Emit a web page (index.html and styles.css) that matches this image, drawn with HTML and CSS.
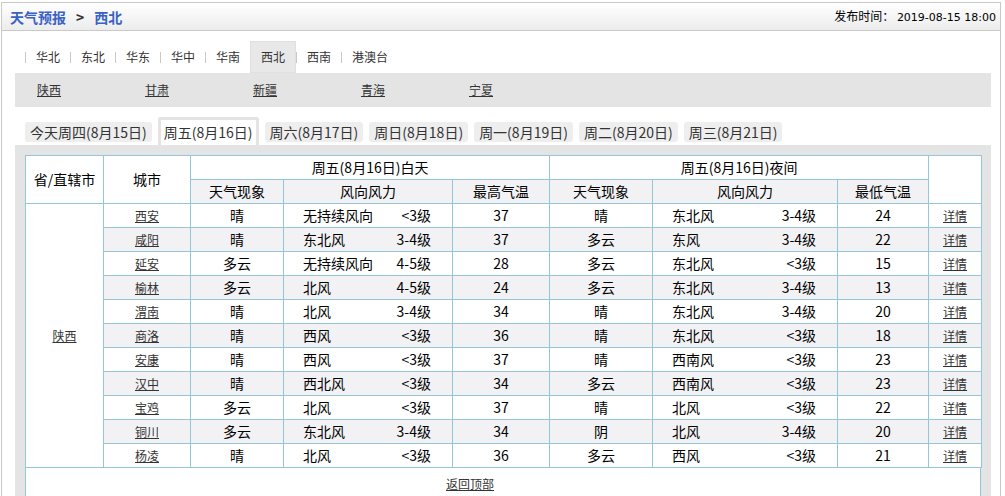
FILE: index.html
```html
<!DOCTYPE html>
<html lang="zh-CN">
<head>
<meta charset="utf-8">
<title>天气预报 - 西北</title>
<link rel="stylesheet" href="styles.css">
</head>
<body>
<div class="wrap">
  <div class="head">
    <div class="crumb"><a class="crumb-link" href="#">天气预报</a><span class="gt">&gt;</span><a class="crumb-link" href="#">西北</a></div>
    <div class="pub">发布时间： <span class="date">2019-08-15 18:00</span></div>
  </div>
  <div class="content">
    <ul class="regions">
      <li class="sep"></li><li class="region">华北</li>
      <li class="sep"></li><li class="region">东北</li>
      <li class="sep"></li><li class="region">华东</li>
      <li class="sep"></li><li class="region">华中</li>
      <li class="sep"></li><li class="region">华南</li>
      <li class="sep"></li><li class="region active">西北</li>
      <li class="sep"></li><li class="region">西南</li>
      <li class="sep"></li><li class="region">港澳台</li>
    </ul>
    <ul class="provinces">
      <li><a href="#">陕西</a></li>
      <li><a href="#">甘肃</a></li>
      <li><a href="#">新疆</a></li>
      <li><a href="#">青海</a></li>
      <li><a href="#">宁夏</a></li>
    </ul>
    <ul class="days">
      <li class="day">今天周四(8月15日)</li>
      <li class="day active">周五(8月16日)</li>
      <li class="day">周六(8月17日)</li>
      <li class="day">周日(8月18日)</li>
      <li class="day">周一(8月19日)</li>
      <li class="day">周二(8月20日)</li>
      <li class="day">周三(8月21日)</li>
    </ul>
    <div class="panel">
      <div class="box">
        <table class="fc">
          <colgroup>
            <col class="c-prov"><col class="c-city"><col class="c-wx"><col class="c-wind"><col class="c-temp"><col class="c-nwx"><col class="c-nwind"><col class="c-ntemp"><col class="c-more">
          </colgroup>
          <thead>
            <tr class="h1">
              <th rowspan="2">省/直辖市</th>
              <th rowspan="2">城市</th>
              <th colspan="3">周五(8月16日)白天</th>
              <th colspan="3">周五(8月16日)夜间</th>
              <th rowspan="2"></th>
            </tr>
            <tr class="h2">
              <th>天气现象</th><th>风向风力</th><th>最高气温</th>
              <th>天气现象</th><th>风向风力</th><th>最低气温</th>
            </tr>
          </thead>
          <tbody>
            <tr>
              <td rowspan="11" class="prov"><a href="#">陕西</a></td>
              <td><a href="#">西安</a></td><td>晴</td><td><div class="wind"><span>无持续风向</span><span>&lt;3级</span></div></td><td>37</td>
              <td>晴</td><td><div class="wind"><span>东北风</span><span>3-4级</span></div></td><td>24</td><td><a href="#">详情</a></td>
            </tr>
            <tr class="alt">
              <td><a href="#">咸阳</a></td><td>晴</td><td><div class="wind"><span>东北风</span><span>3-4级</span></div></td><td>37</td>
              <td>多云</td><td><div class="wind"><span>东风</span><span>3-4级</span></div></td><td>22</td><td><a href="#">详情</a></td>
            </tr>
            <tr>
              <td><a href="#">延安</a></td><td>多云</td><td><div class="wind"><span>无持续风向</span><span>4-5级</span></div></td><td>28</td>
              <td>多云</td><td><div class="wind"><span>东北风</span><span>&lt;3级</span></div></td><td>15</td><td><a href="#">详情</a></td>
            </tr>
            <tr class="alt">
              <td><a href="#">榆林</a></td><td>多云</td><td><div class="wind"><span>北风</span><span>4-5级</span></div></td><td>24</td>
              <td>多云</td><td><div class="wind"><span>东北风</span><span>3-4级</span></div></td><td>13</td><td><a href="#">详情</a></td>
            </tr>
            <tr>
              <td><a href="#">渭南</a></td><td>晴</td><td><div class="wind"><span>北风</span><span>3-4级</span></div></td><td>34</td>
              <td>晴</td><td><div class="wind"><span>东北风</span><span>3-4级</span></div></td><td>20</td><td><a href="#">详情</a></td>
            </tr>
            <tr class="alt">
              <td><a href="#">商洛</a></td><td>晴</td><td><div class="wind"><span>西风</span><span>&lt;3级</span></div></td><td>36</td>
              <td>晴</td><td><div class="wind"><span>东北风</span><span>&lt;3级</span></div></td><td>18</td><td><a href="#">详情</a></td>
            </tr>
            <tr>
              <td><a href="#">安康</a></td><td>晴</td><td><div class="wind"><span>西风</span><span>&lt;3级</span></div></td><td>37</td>
              <td>晴</td><td><div class="wind"><span>西南风</span><span>&lt;3级</span></div></td><td>23</td><td><a href="#">详情</a></td>
            </tr>
            <tr class="alt">
              <td><a href="#">汉中</a></td><td>晴</td><td><div class="wind"><span>西北风</span><span>&lt;3级</span></div></td><td>34</td>
              <td>多云</td><td><div class="wind"><span>西南风</span><span>&lt;3级</span></div></td><td>23</td><td><a href="#">详情</a></td>
            </tr>
            <tr>
              <td><a href="#">宝鸡</a></td><td>多云</td><td><div class="wind"><span>北风</span><span>&lt;3级</span></div></td><td>37</td>
              <td>晴</td><td><div class="wind"><span>北风</span><span>&lt;3级</span></div></td><td>22</td><td><a href="#">详情</a></td>
            </tr>
            <tr class="alt">
              <td><a href="#">铜川</a></td><td>多云</td><td><div class="wind"><span>东北风</span><span>3-4级</span></div></td><td>34</td>
              <td>阴</td><td><div class="wind"><span>北风</span><span>3-4级</span></div></td><td>20</td><td><a href="#">详情</a></td>
            </tr>
            <tr>
              <td><a href="#">杨凌</a></td><td>晴</td><td><div class="wind"><span>北风</span><span>&lt;3级</span></div></td><td>36</td>
              <td>多云</td><td><div class="wind"><span>西风</span><span>&lt;3级</span></div></td><td>21</td><td><a href="#">详情</a></td>
            </tr>
          </tbody>
        </table>
        <div class="totop"><a href="#">返回顶部</a></div>
      </div>
    </div>
  </div>
</div>
</body>
</html>
```

FILE: styles.css
```css
html, body {
  margin: 0;
  padding: 0;
  overflow: hidden;
  background: #fff;
}
body {
  font-family: "Noto Sans CJK SC", "Noto Sans", sans-serif;
  color: #000;
  font-size: 12px;
}
ul {
  list-style: none;
  margin: 0;
  padding: 0;
}
a {
  color: #333;
  text-decoration: underline;
  font-size: 12px;
}

.wrap {
  margin: 2px 0 0 1px;
  width: 998px;
  border: 1px solid #c9c9c9;
  border-bottom: none;
}

.head {
  height: 27px;
  background: linear-gradient(#ffffff, #ececec);
  border-bottom: 1px solid #c9c9c9;
  display: flex;
  justify-content: space-between;
  align-items: center;
  padding: 0 4px 0 8px;
}
.crumb {
  display: flex;
  align-items: center;
  font-size: 14px;
  font-weight: bold;
  line-height: 20px;
}
.crumb-link {
  color: #3a62c5;
  text-decoration: none;
  font-size: 14px;
}
.gt {
  color: #333;
  margin: 0 10px;
}
.pub {
  font-size: 12px;
  line-height: 20px;
  color: #000;
}
.date {
  font-family: "DejaVu Sans", "Noto Sans", sans-serif;
  font-size: 11px;
}

.content {
  padding: 0 9px 0 13px;
}

.regions {
  margin-top: 10px;
  height: 32px;
  display: flex;
  align-items: center;
  padding-left: 10px;
}
.sep {
  width: 1px;
  height: 11px;
  background: #c8c8c8;
}
.region {
  padding: 0 10px;
  font-size: 12px;
  line-height: 32px;
  color: #333;
}
.region.active {
  margin-left: -1px;
  padding: 0 11px;
  background: #e8e8e8;
  box-shadow: inset 0 0 0 1px #e0e0e0;
}

.provinces {
  background: #e4e4e4;
  height: 34px;
  display: flex;
  align-items: center;
  padding-left: 22px;
}
.provinces li {
  width: 108px;
  line-height: 20px;
}

.days {
  margin-top: 10px;
  height: 28px;
  display: flex;
  align-items: flex-end;
  padding-left: 10px;
}
.day {
  margin: 0 6px 3px 0;
  padding: 0 5px;
  height: 20px;
  line-height: 20px;
  background: #eeeeee;
  border-radius: 3px;
  font-size: 14px;
  color: #333;
  white-space: nowrap;
}
.day.active {
  margin-bottom: 0;
  height: 25px;
  line-height: 24px;
  padding: 0 3px;
  background: #fff;
  border: 3px solid #e4e4e4;
  border-bottom: none;
  border-radius: 3px 3px 0 0;
}

.panel {
  background: #e4e4e4;
  padding: 10px 10px 0 10px;
  width: 956px;
}
.box {
  background: #fff;
}

.fc {
  width: 956px;
  table-layout: fixed;
  border-collapse: collapse;
  font-size: 14px;
}
.c-prov { width: 78px; }
.c-city { width: 87px; }
.c-wx { width: 93px; }
.c-wind { width: 169px; }
.c-temp { width: 97px; }
.c-nwx { width: 103px; }
.c-nwind { width: 185px; }
.c-ntemp { width: 91px; }
.c-more { width: 53px; }

.fc th,
.fc td {
  border: 1px solid #95c6d7;
  padding: 0;
  height: 23px;
  line-height: 23px;
  text-align: center;
  font-weight: normal;
  white-space: nowrap;
  background: #fff;
}
.fc .h2 th {
  background: #f2f2f5;
}
.fc tr.alt td {
  background: #f2f2f5;
}
.fc td.prov {
  background: #fff;
}
.wind {
  display: flex;
  justify-content: space-between;
  padding: 0 21px 0 19px;
}

.totop {
  border-left: 1px solid #95c6d7;
  border-right: 1px solid #95c6d7;
  height: 40px;
  line-height: 32px;
  padding-left: 420px;
}
```
